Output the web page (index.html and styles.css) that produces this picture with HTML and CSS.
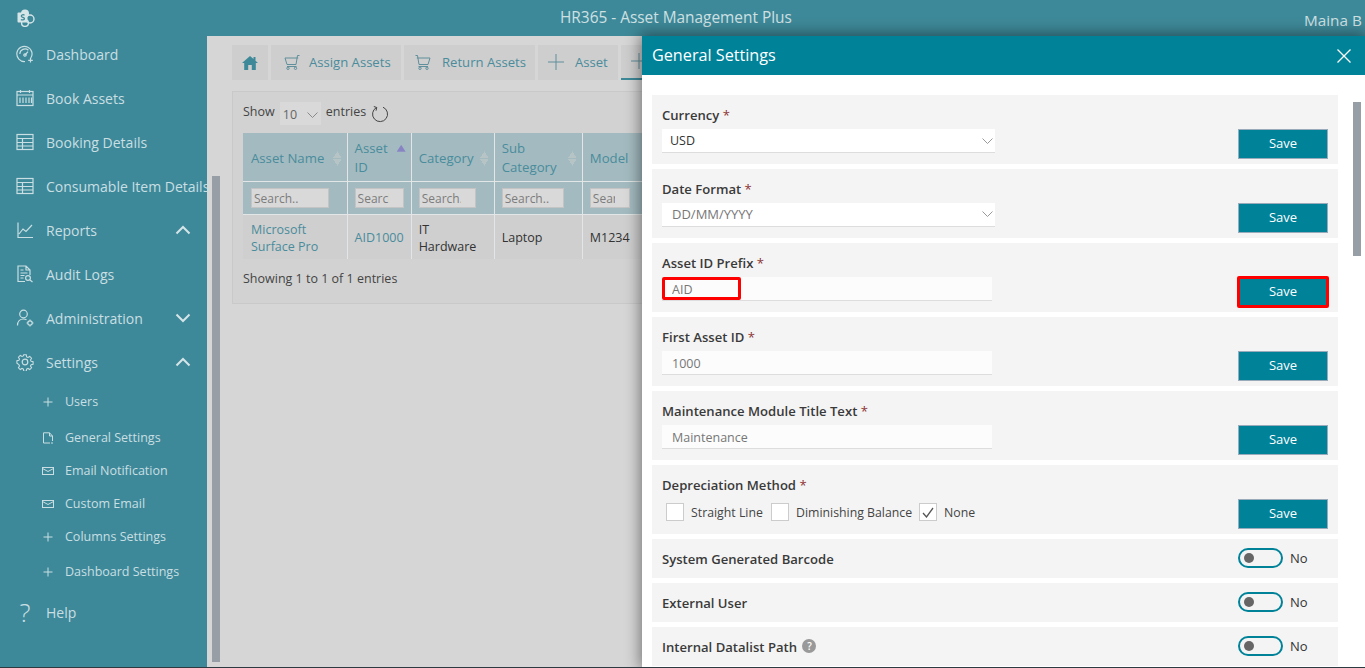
FILE: index.html
```html
<!DOCTYPE html>
<html lang="en">
<head>
    <meta charset="UTF-8">
    <meta name="viewport" content="width=device-width, initial-scale=1.0">
    <title>General Settings</title>
    <link rel="stylesheet" href="styles.css">
</head>
<body>
    <div class="app">
        <header class="topbar">
            <svg class="logo" width="18" height="18" viewBox="0 0 18 18">
                <circle cx="8" cy="4.5" r="4" fill="#d5e5e8"/>
                <circle cx="13" cy="10" r="4" fill="none" stroke="#d5e5e8" stroke-width="1.4"/>
                <circle cx="8" cy="14" r="3.4" fill="none" stroke="#d5e5e8" stroke-width="1.4"/>
                <rect x="0.5" y="3.5" width="10" height="10" rx="1" fill="#d5e5e8"/>
                <path d="M7.5 6.2c-1-.8-3.4-.6-3.2 1 .2 1.5 3.2 1 3.2 2.6 0 1.4-2.6 1.4-3.6.7" fill="none" stroke="#3e8999" stroke-width="1.2"/>
            </svg>
            <div class="topbar-title">HR365 - Asset Management Plus</div>
            <div class="topbar-user">Maina B</div>
        </header>

        <div class="layout">
            <nav class="sidebar">
                <a class="nav-item">
                    <svg class="nav-icon" viewBox="0 0 18 18"><path d="M14.5 13.5A7.6 7.6 0 1 0 9 16.5M3.800 9a5.200 5.200 0 0 1 8.600-3.800M9 10l3-3.400"/><circle cx="9" cy="10" r="1.200"/><path d="M14.500 13v4.600M12.200 15.300h4.600"/></svg>
                    <span>Dashboard</span>
                </a>
                <a class="nav-item">
                    <svg class="nav-icon" viewBox="0 0 18 18"><rect x="1" y="2.500" width="16" height="14"/><path d="M1 6h16M4.500 1v3M13.500 1v3M4 8.500v5.500M7 8.500v5.500M10 8.500v5.500M13 8.500v5.500M15.500 8.500v5.500"/></svg>
                    <span>Book Assets</span>
                </a>
                <a class="nav-item">
                    <svg class="nav-icon" viewBox="0 0 18 18"><rect x="1" y="1.500" width="16" height="15"/><path d="M1 5.500h16M1 9.500h16M1 13h16M6.500 5.500v11"/></svg>
                    <span>Booking Details</span>
                </a>
                <a class="nav-item">
                    <svg class="nav-icon" viewBox="0 0 18 18"><rect x="1" y="1.500" width="16" height="15"/><path d="M1 5.500h16M1 9.500h16M1 13h16M6.500 5.500v11"/></svg>
                    <span>Consumable Item Details</span>
                </a>
                <a class="nav-item">
                    <svg class="nav-icon" viewBox="0 0 18 18"><path d="M2 1.500v15h15M3 13l4-5 3 2.500L16 4"/></svg>
                    <span>Reports</span>
                    <svg class="nav-caret" viewBox="0 0 16 10"><path d="M1.500 8.500 8 2l6.500 6.500"/></svg>
                </a>
                <a class="nav-item">
                    <svg class="nav-icon" viewBox="0 0 18 18"><path d="M9 16.500H2V1h8l4 4v5M10 1v4h4M4.500 5h3M4.500 8h7M4.500 10.500h4M4.500 13h3"/><circle cx="12" cy="13" r="2.400"/><path d="m14 15 2.500 2"/></svg>
                    <span>Audit Logs</span>
                </a>
                <a class="nav-item">
                    <svg class="nav-icon" viewBox="0 0 18 18"><circle cx="7.500" cy="5" r="3.800"/><path d="M1.500 16.500c0-4 2.500-6.500 6-6.500 1.200 0 2.200.3 3 .8"/><circle cx="14" cy="14" r="2.200"/><path d="M14 10.500v1.300M14 16.200v1.300M10.500 14h1.300M16.200 14h1.300"/></svg>
                    <span>Administration</span>
                    <svg class="nav-caret" viewBox="0 0 16 10"><path d="M1.500 1.500 8 8l6.500-6.500"/></svg>
                </a>
                <a class="nav-item">
                    <svg class="nav-icon" viewBox="0 0 18 18"><circle cx="9" cy="9" r="2.800"/><path d="M7.600 1h2.800l.4 2.300 1.500.7 2-1.200 2 2-1.200 2 .7 1.500 2.200.4v2.800l-2.200.4-.7 1.500 1.200 2-2 2-2-1.200-1.500.7-.4 2.300H7.600l-.4-2.300-1.500-.7-2 1.200-2-2 1.200-2-.7-1.500L0 10.400V7.600l2.200-.4.700-1.500-1.200-2 2-2 2 1.200 1.500-.7z" transform="translate(.9 .9) scale(.9)"/></svg>
                    <span>Settings</span>
                    <svg class="nav-caret" viewBox="0 0 16 10"><path d="M1.500 8.500 8 2l6.500 6.500"/></svg>
                </a>
                <a class="sub-item sub-item-first">
                    <svg class="sub-icon" viewBox="0 0 12 12"><path d="M6 1.500v9M1.500 6h9"/></svg>
                    <span>Users</span>
                </a>
                <a class="sub-item sub-item-gap">
                    <svg class="sub-icon" viewBox="0 0 12 12"><path d="M8 11H1.500V.8h6L10.500 4v5M7.500.8V4h3M9 11h2"/></svg>
                    <span>General Settings</span>
                </a>
                <a class="sub-item">
                    <svg class="sub-icon" viewBox="0 0 12 12"><rect x=".5" y="2.500" width="11" height="7"/><path d="M.5 3.500 6 6.500l5.500-3"/></svg>
                    <span>Email Notification</span>
                </a>
                <a class="sub-item">
                    <svg class="sub-icon" viewBox="0 0 12 12"><rect x=".5" y="2.500" width="11" height="7"/><path d="M.5 3.500 6 6.500l5.500-3"/></svg>
                    <span>Custom Email</span>
                </a>
                <a class="sub-item">
                    <svg class="sub-icon" viewBox="0 0 12 12"><path d="M6 1.500v9M1.500 6h9"/></svg>
                    <span>Columns Settings</span>
                </a>
                <a class="sub-item sub-item-gap">
                    <svg class="sub-icon" viewBox="0 0 12 12"><path d="M6 1.500v9M1.500 6h9"/></svg>
                    <span>Dashboard Settings</span>
                </a>
                <a class="nav-item nav-help">
                    <span class="help-mark">?</span>
                    <span>Help</span>
                </a>
            </nav>

            <main class="content">
                <div class="tabs">
                    <a class="tab tab-home">
                        <svg width="16" height="14" viewBox="0 0 16 14"><path d="M8 0 0 7h2.200v7h4V9h3.600v5h4V7H16l-2.500-2.200V1h-2v2z" fill="#3e8999"/></svg>
                    </a>
                    <a class="tab tab-assign">
                        <svg class="tab-icon" viewBox="0 0 16 16"><path d="M15.500 1.500h-2L12 10.500H3L1 4h13.200M3 12.500h9.500"/><circle cx="4" cy="14.300" r="1.200"/><circle cx="11.500" cy="14.300" r="1.200"/></svg>
                        <span>Assign Assets</span>
                    </a>
                    <a class="tab tab-return">
                        <svg class="tab-icon" viewBox="0 0 16 16"><path d="M.5 1.500h2L4 10.500h9L15 4H1.800M3.500 12.500H13"/><circle cx="5" cy="14.300" r="1.200"/><circle cx="12" cy="14.300" r="1.200"/></svg>
                        <span>Return Assets</span>
                    </a>
                    <a class="tab tab-asset">
                        <svg class="tab-icon" viewBox="0 0 16 16"><path d="M8 0v16M0 8h16"/></svg>
                        <span>Asset</span>
                    </a>
                    <a class="tab tab-active">
                        <svg class="tab-icon" viewBox="0 0 16 16"><path d="M8 0v16M0 8h16"/></svg>
                    </a>
                </div>

                <section class="card">
                    <div class="length-row">
                        <span class="length-text">Show</span>
                        <div class="length-select">
                            <span>10</span>
                            <svg width="11" height="6" viewBox="0 0 11 6"><path d="m.5.500 5 5 5-5" fill="none" stroke="#8a8a8a"/></svg>
                        </div>
                        <span class="length-text">entries</span>
                        <svg class="refresh" width="18" height="18" viewBox="0 0 18 18"><path d="M5.500 2.500a7.500 7.500 0 1 0 6.500-.3M2.800 1.500l3 1-.8 3.200" fill="none" stroke="#444"/></svg>
                    </div>
                    <table class="assets">
                        <thead>
                            <tr>
                                <th class="col-name"><div class="th-cell">Asset Name<span class="sort"></span></div></th>
                                <th class="col-id"><div class="th-cell">Asset ID<span class="sort sort-asc"></span></div></th>
                                <th class="col-cat"><div class="th-cell">Category<span class="sort"></span></div></th>
                                <th class="col-sub"><div class="th-cell">Sub Category<span class="sort"></span></div></th>
                                <th class="col-model"><div class="th-cell">Model<span class="sort"></span></div></th>
                            </tr>
                            <tr class="filters">
                                <th><input class="filter filter-name" placeholder="Search.."></th>
                                <th><input class="filter filter-id" placeholder="Search.."></th>
                                <th><input class="filter filter-cat" placeholder="Search.."></th>
                                <th><input class="filter filter-sub" placeholder="Search.."></th>
                                <th><input class="filter filter-model" placeholder="Search.."></th>
                            </tr>
                        </thead>
                        <tbody>
                            <tr>
                                <td class="link">Microsoft Surface Pro</td>
                                <td class="link">AID1000</td>
                                <td>IT Hardware</td>
                                <td>Laptop</td>
                                <td>M1234</td>
                            </tr>
                        </tbody>
                    </table>
                    <div class="table-info">Showing 1 to 1 of 1 entries</div>
                </section>
            </main>
        </div>

        <div class="side-scroll"></div>

        <aside class="panel">
            <div class="panel-head">
                <span class="panel-title">General Settings</span>
                <svg width="14" height="14" viewBox="0 0 14 14"><path d="m.5.500 13 13M13.500.500l-13 13" stroke="#fff" stroke-width="1.300"/></svg>
            </div>
            <div class="panel-body">
                <div class="panel-form">
                    <div class="row">
                        <div class="field">
                            <label class="field-label">Currency <b>*</b></label>
                            <div class="select select-dark"><span>USD</span><svg width="11" height="6" viewBox="0 0 11 6"><path d="m.5.500 5 5 5-5" fill="none" stroke="#999"/></svg></div>
                        </div>
                        <div class="action"><button class="save">Save</button></div>
                    </div>
                    <div class="row">
                        <div class="field">
                            <label class="field-label">Date Format <b>*</b></label>
                            <div class="select select-date"><span>DD/MM/YYYY</span><svg width="11" height="6" viewBox="0 0 11 6"><path d="m.5.500 5 5 5-5" fill="none" stroke="#999"/></svg></div>
                        </div>
                        <div class="action"><button class="save">Save</button></div>
                    </div>
                    <div class="row">
                        <div class="field">
                            <label class="field-label">Asset ID Prefix <b>*</b></label>
                            <div class="input-wrap">
                                <input class="text-input" value="AID">
                                <div class="mark mark-input"></div>
                            </div>
                        </div>
                        <div class="action action-wrap">
                            <button class="save">Save</button>
                            <div class="mark mark-save"></div>
                        </div>
                    </div>
                    <div class="row">
                        <div class="field">
                            <label class="field-label">First Asset ID <b>*</b></label>
                            <input class="text-input" value="1000">
                        </div>
                        <div class="action"><button class="save">Save</button></div>
                    </div>
                    <div class="row">
                        <div class="field">
                            <label class="field-label">Maintenance Module Title Text <b>*</b></label>
                            <input class="text-input" value="Maintenance">
                        </div>
                        <div class="action"><button class="save">Save</button></div>
                    </div>
                    <div class="row">
                        <div class="field">
                            <label class="field-label">Depreciation Method <b>*</b></label>
                            <div class="checks">
                                <span class="check"></span><span class="check-text check-text-1">Straight Line</span>
                                <span class="check"></span><span class="check-text check-text-2">Diminishing Balance</span>
                                <span class="check"><svg width="12" height="11" viewBox="0 0 12 11"><path d="m1 6 3.500 4L11 1" fill="none" stroke="#555" stroke-width="1.300"/></svg></span><span class="check-text">None</span>
                            </div>
                        </div>
                        <div class="action"><button class="save">Save</button></div>
                    </div>
                    <div class="row row-toggle">
                        <div class="field-label">System Generated Barcode</div>
                        <div class="action toggle-wrap"><span class="toggle"><i></i></span><span>No</span></div>
                    </div>
                    <div class="row row-toggle">
                        <div class="field-label">External User</div>
                        <div class="action toggle-wrap"><span class="toggle"><i></i></span><span>No</span></div>
                    </div>
                    <div class="row row-toggle">
                        <div class="field-label">Internal Datalist Path <span class="hint">?</span></div>
                        <div class="action toggle-wrap"><span class="toggle"><i></i></span><span>No</span></div>
                    </div>
                </div>
                <div class="panel-scroll"></div>
            </div>
        </aside>
    </div>
</body>
</html>
```

FILE: styles.css
```css
* {
    box-sizing: border-box;
}
html, body {
    margin: 0;
    padding: 0;
    height: 100%;
    overflow: hidden;
}
body {
    font-family: "Open Sans", "Noto Sans", sans-serif;
    font-size: 13px;
    color: #333;
    background: #d6d6d6;
}
.app {
    position: relative;
    height: 668px;
    border-bottom: 1px solid #2d3a3f;
    overflow: hidden;
    display: flex;
    flex-direction: column;
}

/* top bar */
.topbar {
    height: 36px;
    flex: none;
    background: #3e8999;
    color: #cfe0e3;
    display: flex;
    align-items: center;
    padding-left: 17px;
}
.logo {
    flex: none;
}
.topbar-title {
    flex: none;
    margin-left: 525px;
    width: 231px;
    white-space: nowrap;
    font-size: 15.4px;
    padding-bottom: 2px;
}
.topbar-user {
    flex: none;
    margin-left: 513px;
    white-space: nowrap;
    font-size: 15.3px;
    padding-top: 3px;
}

.layout {
    flex: 1;
    display: flex;
    min-height: 0;
}

/* sidebar */
.sidebar {
    width: 207px;
    flex: none;
    background: #3e8999;
    color: #c9dfe3;
    margin-top: -4px;
}
.nav-item {
    height: 44px;
    display: flex;
    align-items: center;
    padding-left: 16px;
    font-size: 14px;
    white-space: nowrap;
    position: relative;
}
.nav-help {
    margin-top: 2px;
}
.nav-icon {
    width: 18px;
    height: 18px;
    margin-right: 12px;
    flex: none;
    fill: none;
    stroke: #c9dfe3;
    stroke-width: 1.2;
}
.nav-caret {
    width: 16px;
    height: 10px;
    position: absolute;
    left: 175px;
    top: 17px;
    fill: none;
    stroke: #d5e5e8;
    stroke-width: 2;
}
.sub-item {
    height: 33px;
    display: flex;
    align-items: center;
    padding-left: 42px;
    font-size: 12.5px;
    white-space: nowrap;
}
.sub-item-first {
    margin-top: 1px;
}
.sub-item-gap {
    margin-top: 2px;
}
.sub-item-first + .sub-item-gap {
    margin-top: 3px;
}
.sub-icon {
    width: 12px;
    height: 12px;
    margin-right: 11px;
    flex: none;
    fill: none;
    stroke: #c9dfe3;
    stroke-width: 1;
}
.help-mark {
    width: 18px;
    margin-right: 12px;
    text-align: center;
    font-size: 26px;
    font-weight: 300;
    line-height: 1;
}
.side-scroll {
    position: absolute;
    left: 212px;
    top: 176px;
    width: 8px;
    height: 486px;
    background: #979ea5;
}

/* page behind the panel */
.content {
    flex: 1;
    min-width: 0;
    padding: 9px 0 0 25px;
    overflow: hidden;
}
.tabs {
    display: flex;
    gap: 3px;
    height: 35px;
    white-space: nowrap;
}
.tab {
    display: flex;
    align-items: center;
    background: #cecece;
    color: #4a8c9c;
    font-size: 13.1px;
    padding-bottom: 2px;
    flex: none;
}
.tab-home {
    width: 36px;
    justify-content: center;
    padding-bottom: 0;
}
.tab-assign {
    width: 130px;
    padding-left: 13px;
}
.tab-return {
    width: 131px;
    padding-left: 11px;
}
.tab-asset {
    width: 80px;
    padding-left: 10px;
}
.tab-active {
    width: 120px;
    padding-left: 10px;
    border-bottom: 2px solid #3e8999;
}
.tab-icon {
    width: 16px;
    height: 16px;
    margin-right: 11px;
    fill: none;
    stroke: #5f8f9b;
    stroke-width: 1;
    flex: none;
}
.tab-assign .tab-icon {
    margin-right: 9px;
}
.card {
    margin-top: 11px;
    width: 600px;
    height: 213px;
    background: #d2d2d2;
    border: 1px solid #c9c9c9;
    padding: 10px 0 0 10px;
    font-size: 12.5px;
}
.length-row {
    display: flex;
    align-items: center;
    height: 23px;
    color: #444;
}
.length-text {
    padding-bottom: 4px;
}
.length-select {
    width: 41px;
    height: 23px;
    margin: 0 5px;
    padding: 2px 3px 0 3px;
    background: #d9d9d9;
    color: #666;
    display: flex;
    align-items: center;
    justify-content: space-between;
}
.refresh {
    margin-left: 5px;
    margin-top: 1px;
}
.assets {
    margin-top: 8px;
    border-collapse: collapse;
    table-layout: fixed;
    width: 480px;
}
.col-name { width: 104px; }
.col-id { width: 64px; }
.col-cat { width: 83px; }
.col-sub { width: 88px; }
.col-model { width: 140px; }
.assets th {
    background: #a3bbc0;
    color: #4a8c9c;
    font-weight: 400;
    text-align: left;
    border: 1px solid #e2e6e7;
    border-top: 0;
    border-left: 0;
    height: 48px;
    padding: 3px 8px 0;
    line-height: 19px;
    font-size: 13.2px;
}
.assets th + th, .assets td + td {
    padding-left: 7px;
}
.th-cell {
    display: flex;
    align-items: center;
    justify-content: space-between;
}
.sort {
    flex: none;
    width: 9px;
    height: 15px;
    margin-right: -3px;
    background:
        linear-gradient(to top right, transparent 50%, #b7c4c6 50%) 0 100% / 50% 7px no-repeat,
        linear-gradient(to top left, transparent 50%, #b7c4c6 50%) 100% 100% / 50% 7px no-repeat,
        linear-gradient(to bottom right, transparent 50%, #b7c4c6 50%) 0 0 / 50% 7px no-repeat,
        linear-gradient(to bottom left, transparent 50%, #b7c4c6 50%) 100% 0 / 50% 7px no-repeat;
}
.sort-asc {
    height: 7px;
    background: #8884c4;
    clip-path: polygon(50% 0, 100% 100%, 0 100%);
    margin-top: -20px;
}
.filters th {
    height: 33px;
    padding-top: 0;
    padding-bottom: 0;
}
.filter {
    display: block;
    height: 20px;
    padding: 2px 14px 0 2px;
    border: 1px solid #c4c4c4;
    background: #d9d9d9;
    font: 12px "Open Sans", sans-serif;
}
.filter::placeholder {
    color: #7c7c7c;
}
.filter-name { width: 78px; }
.filter-id { width: 49px; }
.filter-cat { width: 57px; }
.filter-sub { width: 62px; }
.filter-model { width: 40px; }
.assets td {
    height: 45px;
    padding: 2px 8px 0;
    border-right: 1px solid #e2e6e7;
    background: #cfcfcf;
    color: #333;
    line-height: 17px;
}
.assets td.link {
    color: #4a8c9c;
}
.table-info {
    margin-top: 11px;
    color: #444;
}

/* settings panel, opened over the page */
.panel {
    position: absolute;
    top: 36px;
    left: 642px;
    right: 0;
    bottom: 0;
    background: #fff;
    box-shadow: 0 0 14px 2px rgba(0, 0, 0, 0.45);
    display: flex;
    flex-direction: column;
}
.panel-head {
    height: 39px;
    flex: none;
    background: #008299;
    color: #fff;
    font-size: 16.2px;
    display: flex;
    align-items: center;
    justify-content: space-between;
    padding: 0 14px 0 10px;
}
.panel-title {
    padding-bottom: 2px;
}
.panel-body {
    flex: 1;
    min-height: 0;
    position: relative;
    overflow: hidden;
    padding: 20px 0 0 10px;
}
.panel-form {
    width: 686px;
    display: flex;
    flex-direction: column;
    gap: 5px;
}
.panel-scroll {
    position: absolute;
    right: 4px;
    top: 27px;
    width: 8px;
    height: 154px;
    background: #979ea5;
}
.row {
    height: 69px;
    flex: none;
    background: #f4f4f4;
    padding: 10px 10px 5px;
    display: flex;
    justify-content: space-between;
}
.row-toggle {
    height: 39px;
    padding: 0 10px;
    align-items: center;
}
.field-label {
    display: block;
    height: 24px;
    line-height: 20px;
    color: #3a3a3a;
    font-weight: 600;
    font-size: 13.1px;
}
.row-toggle .field-label {
    height: 20px;
}
.field-label b {
    color: #8e3333;
    font-weight: 400;
}
.select {
    width: 333px;
    height: 24px;
    background: #fff;
    border-bottom: 1px solid #ddd;
    padding: 0 2px 0 8px;
    color: #777;
    display: flex;
    align-items: center;
    justify-content: space-between;
    font-size: 12.5px;
}
.select-dark {
    color: #333;
}
.select-date {
    padding-left: 10px;
    padding-bottom: 1px;
    font-size: 13px;
}
.text-input {
    display: block;
    width: 330px;
    height: 24px;
    border: 0;
    border-bottom: 1px solid #ddd;
    background: #fcfcfc;
    padding: 2px 10px 0;
    color: #777;
    font: 12.5px "Open Sans", sans-serif;
}
.input-wrap, .action-wrap {
    position: relative;
}
.mark {
    position: absolute;
    border: 3px solid #f00;
    border-radius: 2px;
}
.mark-input {
    left: 0;
    top: 0;
    width: 79px;
    height: 23px;
}
.mark-save {
    left: -1px;
    bottom: -1px;
    width: 92px;
    height: 32px;
}
.action {
    width: 90px;
    flex: none;
    align-self: flex-end;
}
.save {
    display: block;
    width: 90px;
    height: 30px;
    border: 1px solid #9ab;
    background: #008299;
    color: #fff;
    font: 13px "Open Sans", sans-serif;
    padding: 0 0 2px;
}
.checks {
    display: flex;
    align-items: center;
    height: 24px;
    margin-top: 1px;
    padding-left: 4px;
}
.check {
    width: 18px;
    height: 18px;
    background: #fff;
    border: 1px solid #ccc;
    flex: none;
    display: flex;
    align-items: center;
    justify-content: center;
}
.check-text {
    margin-left: 7px;
    color: #444;
    font-size: 12.3px;
    white-space: nowrap;
}
.check-text-1 {
    width: 73px;
    margin-right: 7px;
}
.check-text-2 {
    width: 115px;
    margin-right: 8px;
}
.toggle-wrap {
    align-self: center;
    display: flex;
    align-items: center;
    gap: 7px;
    margin-top: -2px;
    font-size: 13px;
}
.toggle {
    width: 45px;
    height: 20px;
    border: 2px solid #008299;
    border-radius: 10px;
    display: flex;
    align-items: center;
    padding-left: 4px;
}
.toggle i {
    width: 10px;
    height: 10px;
    border-radius: 50%;
    background: #666;
}
.hint {
    display: inline-block;
    width: 14px;
    height: 14px;
    border-radius: 50%;
    background: #999;
    color: #fff;
    font-size: 10px;
    line-height: 14px;
    text-align: center;
    vertical-align: 2px;
    margin-left: 2px;
}
```
